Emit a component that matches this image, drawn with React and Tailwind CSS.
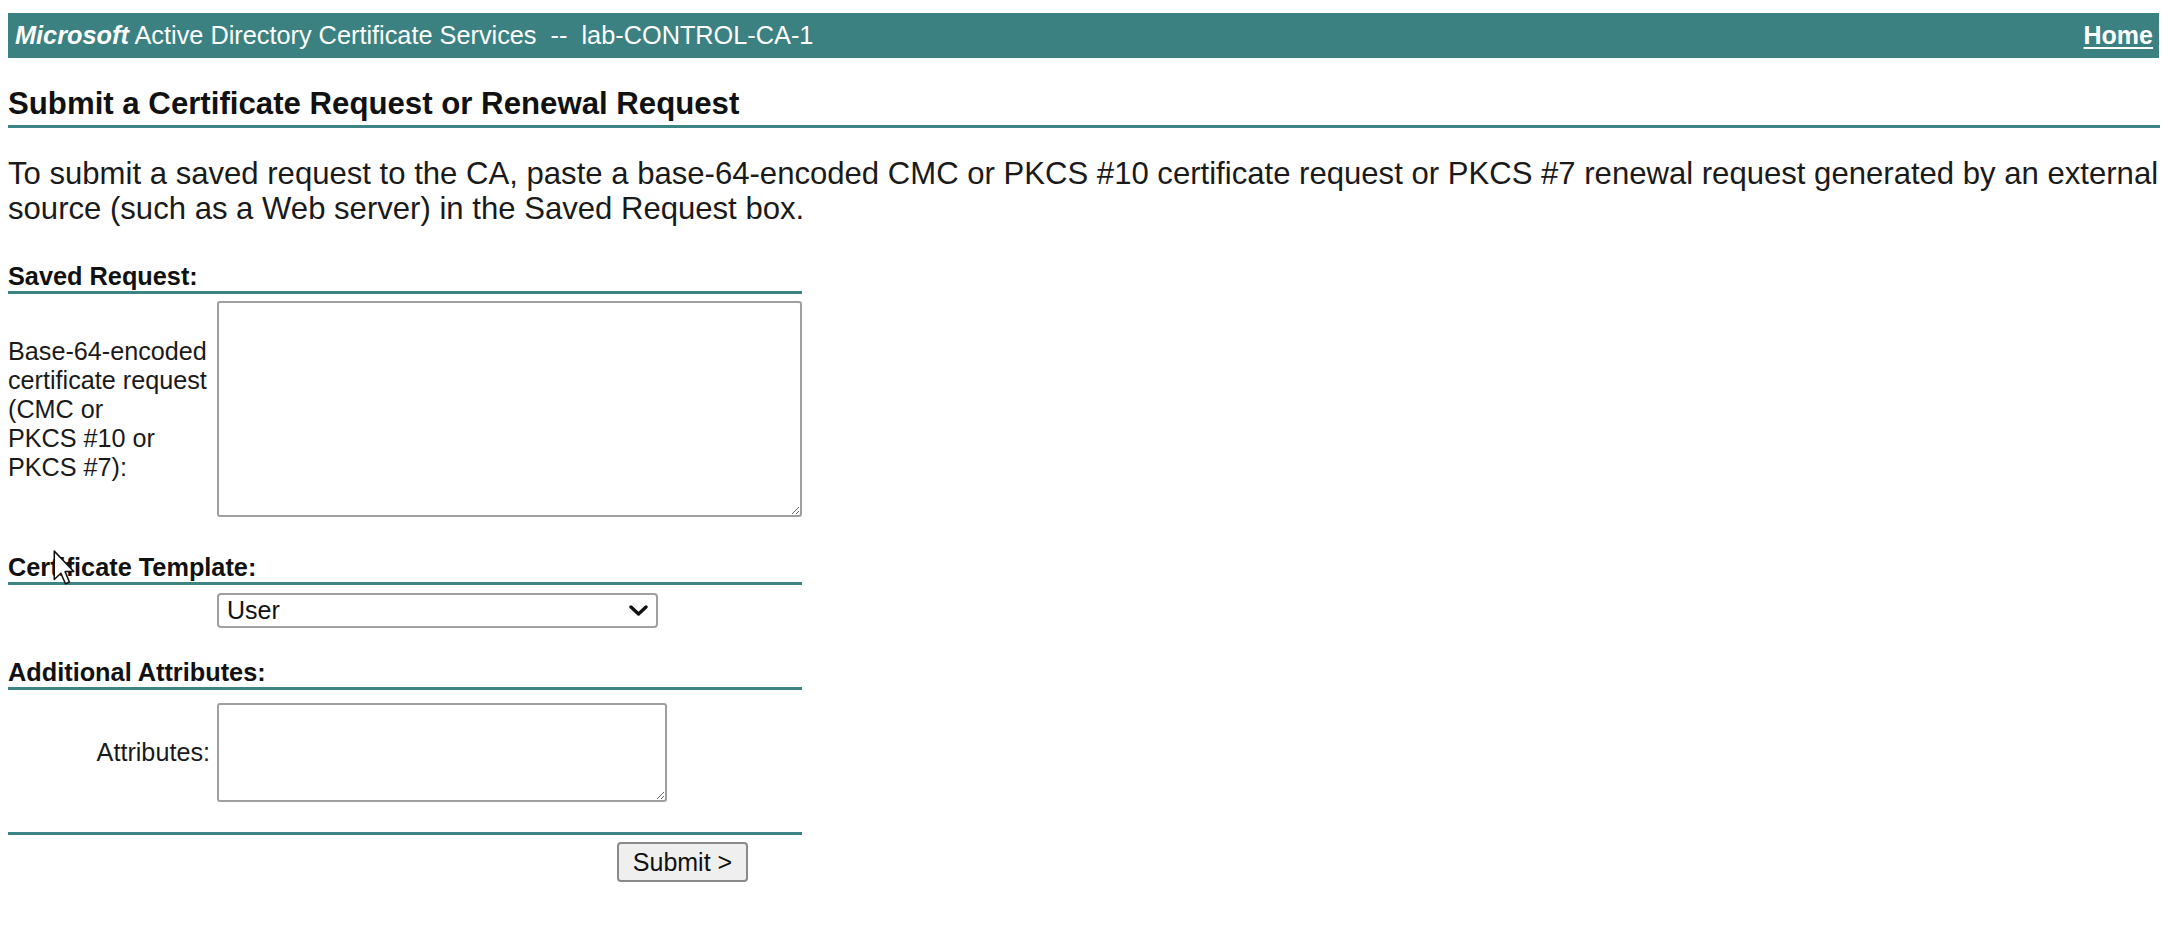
const teal = "border-[#3d8585]";

function SectionHeading({ children, className = "" }) {
  return (
    <div className={`border-b-[3px] ${teal} text-[25.3px] leading-[29px] font-bold text-[#111] ${className}`}>
      {children}
    </div>
  );
}

export default function App() {
  return (
    <div className="relative min-h-[940px] bg-white pl-[8px] pt-[13px] font-['Liberation_Sans',Arial,sans-serif] text-[#111]">
      {/* header bar */}
      <div className="flex h-[45px] w-[2151px] items-center justify-between bg-[#3b8181] pl-[7px] pr-[6px] text-[25.3px] leading-[29px] text-white">
        <div className="whitespace-nowrap">
          <span className="font-bold italic">Microsoft</span> Active Directory Certificate Services{"\u00a0 --\u00a0 "}lab-CONTROL-CA-1
        </div>
        <a href="#" className="text-[25px] font-bold text-white underline underline-offset-[3px]">
          Home
        </a>
      </div>

      <div className={`mt-[28px] w-[2152px] border-b-[3px] ${teal} pb-[3px] text-[31.2px] leading-[36px] font-bold`}>
        Submit a Certificate Request or Renewal Request
      </div>

      <p className="mt-[28px] w-[2158px] whitespace-nowrap text-[31.1px] leading-[35px] text-[#1a1a1a]">
        To submit a saved request to the CA, paste a base-64-encoded CMC or PKCS #10 certificate request or PKCS #7 renewal request generated by an external
        <br />
        source (such as a Web server) in the Saved Request box.
      </p>

      <form className="mt-[36px] w-[794px]" onSubmit={(e) => e.preventDefault()}>
        <SectionHeading>Saved Request:</SectionHeading>
        <div className="mt-[7px] flex items-center gap-[7px]">
          <label className="w-[202px] whitespace-nowrap text-[25.2px] leading-[29px] text-[#1a1a1a]">
            Base-64-encoded
            <br />
            certificate request
            <br />
            (CMC or
            <br />
            PKCS #10 or
            <br />
            PKCS #7):
          </label>
          <textarea className="h-[216px] w-[585px] rounded-[3px] border-2 border-[#a0a0a0] bg-white outline-none" />
        </div>

        <SectionHeading className="mt-[36px]">Certificate Template:</SectionHeading>
        <div className="mt-[8px] pl-[209px]">
          <div className="relative w-[441px]">
            <select className="h-[35px] w-[441px] appearance-none rounded-[4px] border-2 border-[#a0a0a0] bg-white pl-[8px] text-[25px] leading-[29px] text-[#111] outline-none">
              <option>User</option>
            </select>
            <svg className="pointer-events-none absolute right-[10px] top-[12px]" width="19" height="11" viewBox="0 0 19 11">
              <path d="M2 2 L9.5 9 L17 2" fill="none" stroke="#111" strokeWidth="3.4" strokeLinecap="round" strokeLinejoin="round" />
            </svg>
          </div>
        </div>

        <SectionHeading className="mt-[30px]">Additional Attributes:</SectionHeading>
        <div className="mt-[13px] flex items-center gap-[7px]">
          <label className="w-[202px] text-right text-[25.2px] leading-[29px] text-[#1a1a1a]">Attributes:</label>
          <textarea className="h-[99px] w-[450px] rounded-[3px] border-2 border-[#a0a0a0] bg-white outline-none" />
        </div>

        <div className="mt-[30px] h-[3px] bg-[#3d8585]" />
        <div className="mt-[7px] pl-[609px]">
          <button type="submit" className="h-[40px] w-[131px] rounded-[4px] border-2 border-[#8a8a8a] bg-[#efefef] text-[25px] leading-[29px] text-[#111]">
            Submit &gt;
          </button>
        </div>
      </form>

      {/* mouse pointer captured in the screenshot */}
      <svg className="pointer-events-none absolute left-[53px] top-[550px]" width="23" height="36" viewBox="0 0 12 19">
        <path d="M0.6 0.6 L0.6 15.6 L4.1 12.3 L6.5 17.8 L8.6 16.9 L6.3 11.4 L10.9 11.4 Z" fill="white" stroke="#111" strokeWidth="0.8" strokeLinejoin="round" />
      </svg>
    </div>
  );
}
